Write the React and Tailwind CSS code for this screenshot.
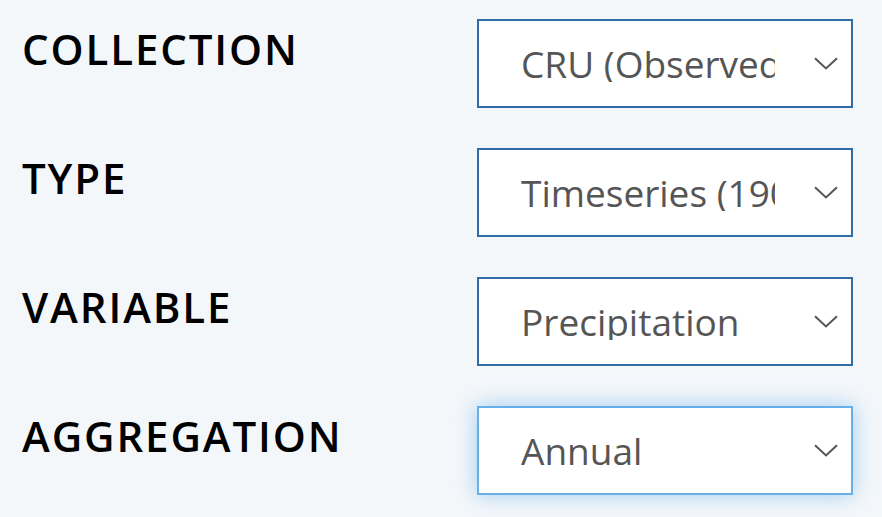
import React from 'react';

const fields = [
  { label: 'COLLECTION', value: 'CRU (Observed)' },
  { label: 'TYPE', value: 'Timeseries (1901-2022)' },
  { label: 'VARIABLE', value: 'Precipitation' },
  { label: 'AGGREGATION', value: 'Annual', focused: true },
];

const Chevron = () => (
  <svg width="24" height="13" viewBox="0 0 24 13" fill="none" className="shrink-0">
    <path d="M1 1.2 L12 11.5 L23 1.2" stroke="#555" strokeWidth="2" />
  </svg>
);

const SelectBox = ({ value, focused }) => (
  <div
    className={`flex items-center w-[376px] h-[89px] bg-white border-2 pl-[42px] pr-[13px] ${
      focused
        ? 'border-[#66afe9] shadow-[0_0_20px_rgba(102,175,233,0.6)]'
        : 'border-[#2f6ca8]'
    }`}
  >
    <div className="w-[254px] overflow-hidden whitespace-nowrap text-[37px] text-[#555] leading-none">
      {value}
    </div>
    <div className="flex-1" />
    <Chevron />
  </div>
);

export default function App() {
  return (
    <div
      className="w-[882px] h-[517px] bg-[#f4f7fa] pt-[19px] pl-[22px] pr-[29px] flex flex-col gap-[40px] overflow-hidden"
      style={{ fontFamily: '"Open Sans", "Noto Sans", sans-serif' }}
    >
      {fields.map((f) => (
        <div key={f.label} className="flex justify-between items-start">
          <div className="pt-[9px] text-[42px] font-[550] tracking-[0.045em] text-black leading-none">
            {f.label}
          </div>
          <SelectBox value={f.value} focused={f.focused} />
        </div>
      ))}
    </div>
  );
}
